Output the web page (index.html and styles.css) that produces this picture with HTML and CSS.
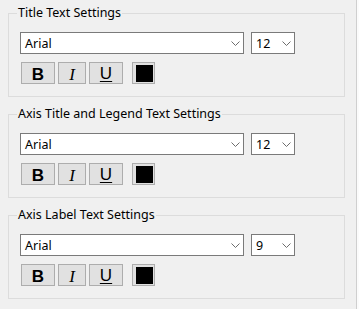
FILE: index.html
```html
<!DOCTYPE html>
<html>
<head>
<meta charset="utf-8">
<link rel="stylesheet" href="styles.css">
</head>
<body>
<div class="panel">
  <div class="content">
    <fieldset class="group">
      <legend>Title Text Settings</legend>
      <div class="row first">
        <div class="select font"><span>Arial</span><svg class="chev" width="9" height="5" viewBox="0 0 9 5"><polyline points="0.5,0.5 4.5,4.5 8.5,0.5"/></svg></div>
        <div class="select size"><span>12</span><svg class="chev" width="9" height="5" viewBox="0 0 9 5"><polyline points="0.5,0.5 4.5,4.5 8.5,0.5"/></svg></div>
      </div>
      <div class="row tools">
        <div class="btn b">B</div>
        <div class="btn i">I</div>
        <div class="btn u">U</div>
        <div class="btn color"><div class="swatch"></div></div>
      </div>
    </fieldset>
    <fieldset class="group">
      <legend>Axis Title and Legend Text Settings</legend>
      <div class="row first">
        <div class="select font"><span>Arial</span><svg class="chev" width="9" height="5" viewBox="0 0 9 5"><polyline points="0.5,0.5 4.5,4.5 8.5,0.5"/></svg></div>
        <div class="select size"><span>12</span><svg class="chev" width="9" height="5" viewBox="0 0 9 5"><polyline points="0.5,0.5 4.5,4.5 8.5,0.5"/></svg></div>
      </div>
      <div class="row tools">
        <div class="btn b">B</div>
        <div class="btn i">I</div>
        <div class="btn u">U</div>
        <div class="btn color"><div class="swatch"></div></div>
      </div>
    </fieldset>
    <fieldset class="group">
      <legend>Axis Label Text Settings</legend>
      <div class="row first">
        <div class="select font"><span>Arial</span><svg class="chev" width="9" height="5" viewBox="0 0 9 5"><polyline points="0.5,0.5 4.5,4.5 8.5,0.5"/></svg></div>
        <div class="select size"><span>9</span><svg class="chev" width="9" height="5" viewBox="0 0 9 5"><polyline points="0.5,0.5 4.5,4.5 8.5,0.5"/></svg></div>
      </div>
      <div class="row tools">
        <div class="btn b">B</div>
        <div class="btn i">I</div>
        <div class="btn u">U</div>
        <div class="btn color"><div class="swatch"></div></div>
      </div>
    </fieldset>
  </div>
  <div class="strip"></div>
</div>
</body>
</html>
```
FILE: styles.css
```css
html, body {
  margin: 0;
  padding: 0;
  background: #f0f0f0;
}
body {
  font-family: "Noto Sans", "Liberation Sans", sans-serif;
  font-size: 12px;
  color: #000;
}
.panel {
  display: flex;
  width: 359px;
  height: 309px;
  overflow: hidden;
}
.content {
  width: 356px;
  padding: 6px 0 0 8px;
  box-sizing: border-box;
  display: flex;
  flex-direction: column;
  gap: 10px;
}
.strip {
  width: 2px;
  border-left: 1px solid #cfcfcf;
  background: #fbfbfb;
}
.group {
  margin: 0;
  width: 337px;
  height: 91px;
  box-sizing: border-box;
  border: 1px solid #dcdcdc;
  padding: 0 0 0 11px;
}
.group legend {
  margin-left: -3px;
  padding: 0 1px;
  font-size: 12.5px;
  line-height: 14px;
  height: 14px;
}
.row {
  display: flex;
  align-items: center;
}
.row.first {
  margin-top: 12px;
}
.row.tools {
  margin-top: 8px;
}
.select {
  height: 22px;
  box-sizing: border-box;
  border: 1px solid #7a7a7a;
  background: #fff;
  display: flex;
  align-items: center;
  justify-content: space-between;
  padding: 0 3px 0 4px;
  font-size: 12.5px;
}
.select.font {
  width: 224px;
}
.select.size {
  width: 44px;
  margin-left: 7px;
}
.chev polyline {
  fill: none;
  stroke: #6d6d6d;
  stroke-width: 1;
}
.tools {
  gap: 3px;
  padding-left: 1px;
}
.btn {
  height: 22px;
  box-sizing: border-box;
  border: 1px solid #adadad;
  background: #e1e1e1;
  display: flex;
  align-items: center;
  justify-content: center;
  line-height: 1;
}
.btn.b {
  width: 34px;
  font-family: "Liberation Sans", sans-serif;
  font-weight: bold;
  font-size: 17px;
  padding-top: 2px;
}
.btn.i {
  width: 28px;
  font-family: "Liberation Serif", serif;
  font-style: italic;
  font-size: 17px;
  padding-top: 2px;
}
.btn.u {
  width: 34px;
  font-family: "Liberation Sans", sans-serif;
  font-size: 17px;
  text-decoration: underline;
  text-underline-offset: 2px;
  padding-top: 1px;
}
.btn.color {
  width: 23px;
  margin-left: 6px;
  padding: 2px 1px 1px 2px;
}
.swatch {
  width: 17px;
  height: 17px;
  background: #000;
}
```
